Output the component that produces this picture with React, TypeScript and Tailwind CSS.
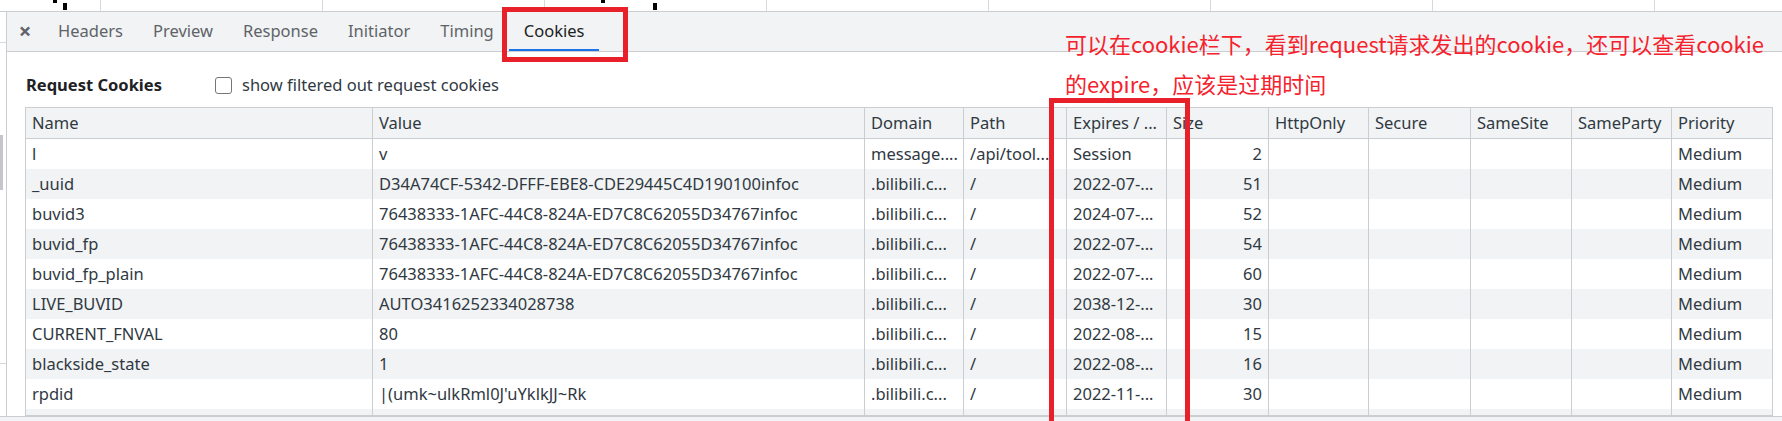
import React from "react";

type Cookie = {
  name: string;
  value: string;
  domain: string;
  path: string;
  expires: string;
  size: string;
};

const cookies: Cookie[] = [
  { name: "l", value: "v", domain: "message....", path: "/api/tool...", expires: "Session", size: "2" },
  { name: "_uuid", value: "D34A74CF-5342-DFFF-EBE8-CDE29445C4D190100infoc", domain: ".bilibili.c...", path: "/", expires: "2022-07-...", size: "51" },
  { name: "buvid3", value: "76438333-1AFC-44C8-824A-ED7C8C62055D34767infoc", domain: ".bilibili.c...", path: "/", expires: "2024-07-...", size: "52" },
  { name: "buvid_fp", value: "76438333-1AFC-44C8-824A-ED7C8C62055D34767infoc", domain: ".bilibili.c...", path: "/", expires: "2022-07-...", size: "54" },
  { name: "buvid_fp_plain", value: "76438333-1AFC-44C8-824A-ED7C8C62055D34767infoc", domain: ".bilibili.c...", path: "/", expires: "2022-07-...", size: "60" },
  { name: "LIVE_BUVID", value: "AUTO3416252334028738", domain: ".bilibili.c...", path: "/", expires: "2038-12-...", size: "30" },
  { name: "CURRENT_FNVAL", value: "80", domain: ".bilibili.c...", path: "/", expires: "2022-08-...", size: "15" },
  { name: "blackside_state", value: "1", domain: ".bilibili.c...", path: "/", expires: "2022-08-...", size: "16" },
  { name: "rpdid", value: "|(umk~ulkRml0J'uYklkJJ~Rk", domain: ".bilibili.c...", path: "/", expires: "2022-11-...", size: "30" },
];

const columns = ["Name", "Value", "Domain", "Path", "Expires / ...", "Size", "HttpOnly", "Secure", "SameSite", "SameParty", "Priority"];

const tabs = ["Headers", "Preview", "Response", "Initiator", "Timing", "Cookies"];

const gridCols =
  "grid grid-cols-[347px_492px_99px_103px_100px_102px_100px_102px_101px_100px_100px]";

function Cell({ children, right, last }: { children?: React.ReactNode; right?: boolean; last?: boolean }) {
  return (
    <div
      className={`flex items-center overflow-hidden whitespace-nowrap px-[6px] ${right ? "justify-end" : ""} ${
        last ? "" : "border-r border-[#cbcdd1]"
      }`}
    >
      {children}
    </div>
  );
}

export default function App() {
  return (
    <div
      className="relative h-[421px] w-[1782px] overflow-hidden bg-white text-[#303942]"
      style={{ fontFamily: '"Noto Sans", "Noto Sans CJK SC", sans-serif' }}
    >
      {/* request grid peeking above */}
      <div className="flex h-[12px] border-b border-[#cbcdd1]">
        <div className="flex w-[101px] items-start border-r border-[#d6d8db]">
          <div className="ml-[53px] h-[3px] w-[4px] bg-black" />
          <div className="ml-[6px] mt-[3px] h-[7px] w-[4px] bg-black" />
        </div>
        <div className="w-[222px] border-r border-[#d6d8db]" />
        <div className="w-[222px] border-r border-[#d6d8db]" />
        <div className="flex w-[222px] items-start border-r border-[#d6d8db]">
          <div className="ml-[56px] h-[3px] w-[4px] bg-black" />
          <div className="ml-[48px] mt-[3px] h-[7px] w-[4px] bg-black" />
        </div>
        <div className="w-[222px] border-r border-[#d6d8db]" />
        <div className="w-[222px] border-r border-[#d6d8db]" />
        <div className="w-[222px] border-r border-[#d6d8db]" />
        <div className="w-[222px] border-r border-[#d6d8db]" />
      </div>

      <div className="flex h-[404px]">
        {/* left network strip */}
        <div className="flex w-[7px] flex-col border-r border-[#cbcdd1]">
          <div className="h-[31px] border-b border-[#d6d8db]" />
          <div className="mt-[92px] h-[55px] w-[3px] bg-[#c4c6c9]" />
          <div className="mt-[173px] border-b border-[#d6d8db]" />
        </div>

        <div className="flex flex-1 flex-col">
          {/* tabs */}
          <div className="flex h-[40px] items-stretch border-b border-[#cbcdd1] bg-[#f1f3f4] text-[16.5px]">
            <div className="flex w-[36px] items-center justify-center pb-[2px] text-[22px] font-bold text-[#5f6368]">
              ×
            </div>
            {tabs.map((t) => (
              <div
                key={t}
                className={`flex items-center px-[15px] ${
                  t === "Cookies" ? "border-b-2 border-[#1a73e8] pt-[2px] text-[#202124]" : "text-[#5f6368]"
                }`}
              >
                {t}
              </div>
            ))}
          </div>

          {/* request cookies header */}
          <div className="flex h-[55px] items-center pb-[1px] pl-[19px] pt-[13px] text-[16.5px]">
            <div className="w-[189px] font-bold text-[#202124]">Request Cookies</div>
            <div className="h-[17px] w-[17px] rounded-[3px] border-[1.5px] border-[#767676] bg-white" />
            <div className="ml-[10px] text-[#303942]">show filtered out request cookies</div>
          </div>

          {/* table */}
          <div className="ml-[18px] h-[309px] w-[1748px] overflow-hidden border border-[#cbcdd1] text-[16.5px]">
            <div className={`${gridCols} h-[31px] border-b border-[#cbcdd1] bg-[#f1f3f4] text-[#303942]`}>
              {columns.map((c, i) => (
                <Cell key={c} last={i === columns.length - 1}>
                  {c}
                </Cell>
              ))}
            </div>
            {[...cookies, null].map((c, i) => (
              <div
                key={i}
                className={`${gridCols} h-[30px] ${i % 2 === 1 ? "bg-[#f1f3f4]" : "bg-white"}`}
              >
                <Cell>{c?.name}</Cell>
                <Cell>{c?.value}</Cell>
                <Cell>{c?.domain}</Cell>
                <Cell>{c?.path}</Cell>
                <Cell>{c?.expires}</Cell>
                <Cell right>{c?.size}</Cell>
                <Cell />
                <Cell />
                <Cell />
                <Cell />
                <Cell last>{c ? "Medium" : ""}</Cell>
              </div>
            ))}
          </div>
        </div>
      </div>

      <div className="h-[5px] border-t border-[#cbcdd1] bg-[#f1f3f4]" />

      {/* annotations */}
      <div className="absolute left-[502px] top-[7px] h-[55px] w-[126px] border-[5px] border-[#e8202a]" />
      <div className="absolute left-[1049px] top-[98px] h-[330px] w-[141px] border-[5px] border-[#e8202a]" />
      <div
        className="absolute left-[1065px] top-[23px] whitespace-nowrap text-[22px] leading-[40px] text-[#f5222d]"
        style={{ fontFamily: '"Noto Sans CJK SC", sans-serif' }}
      >
        <div>可以在cookie栏下，看到request请求发出的cookie，还可以查看cookie</div>
        <div>的expire，应该是过期时间</div>
      </div>
    </div>
  );
}
